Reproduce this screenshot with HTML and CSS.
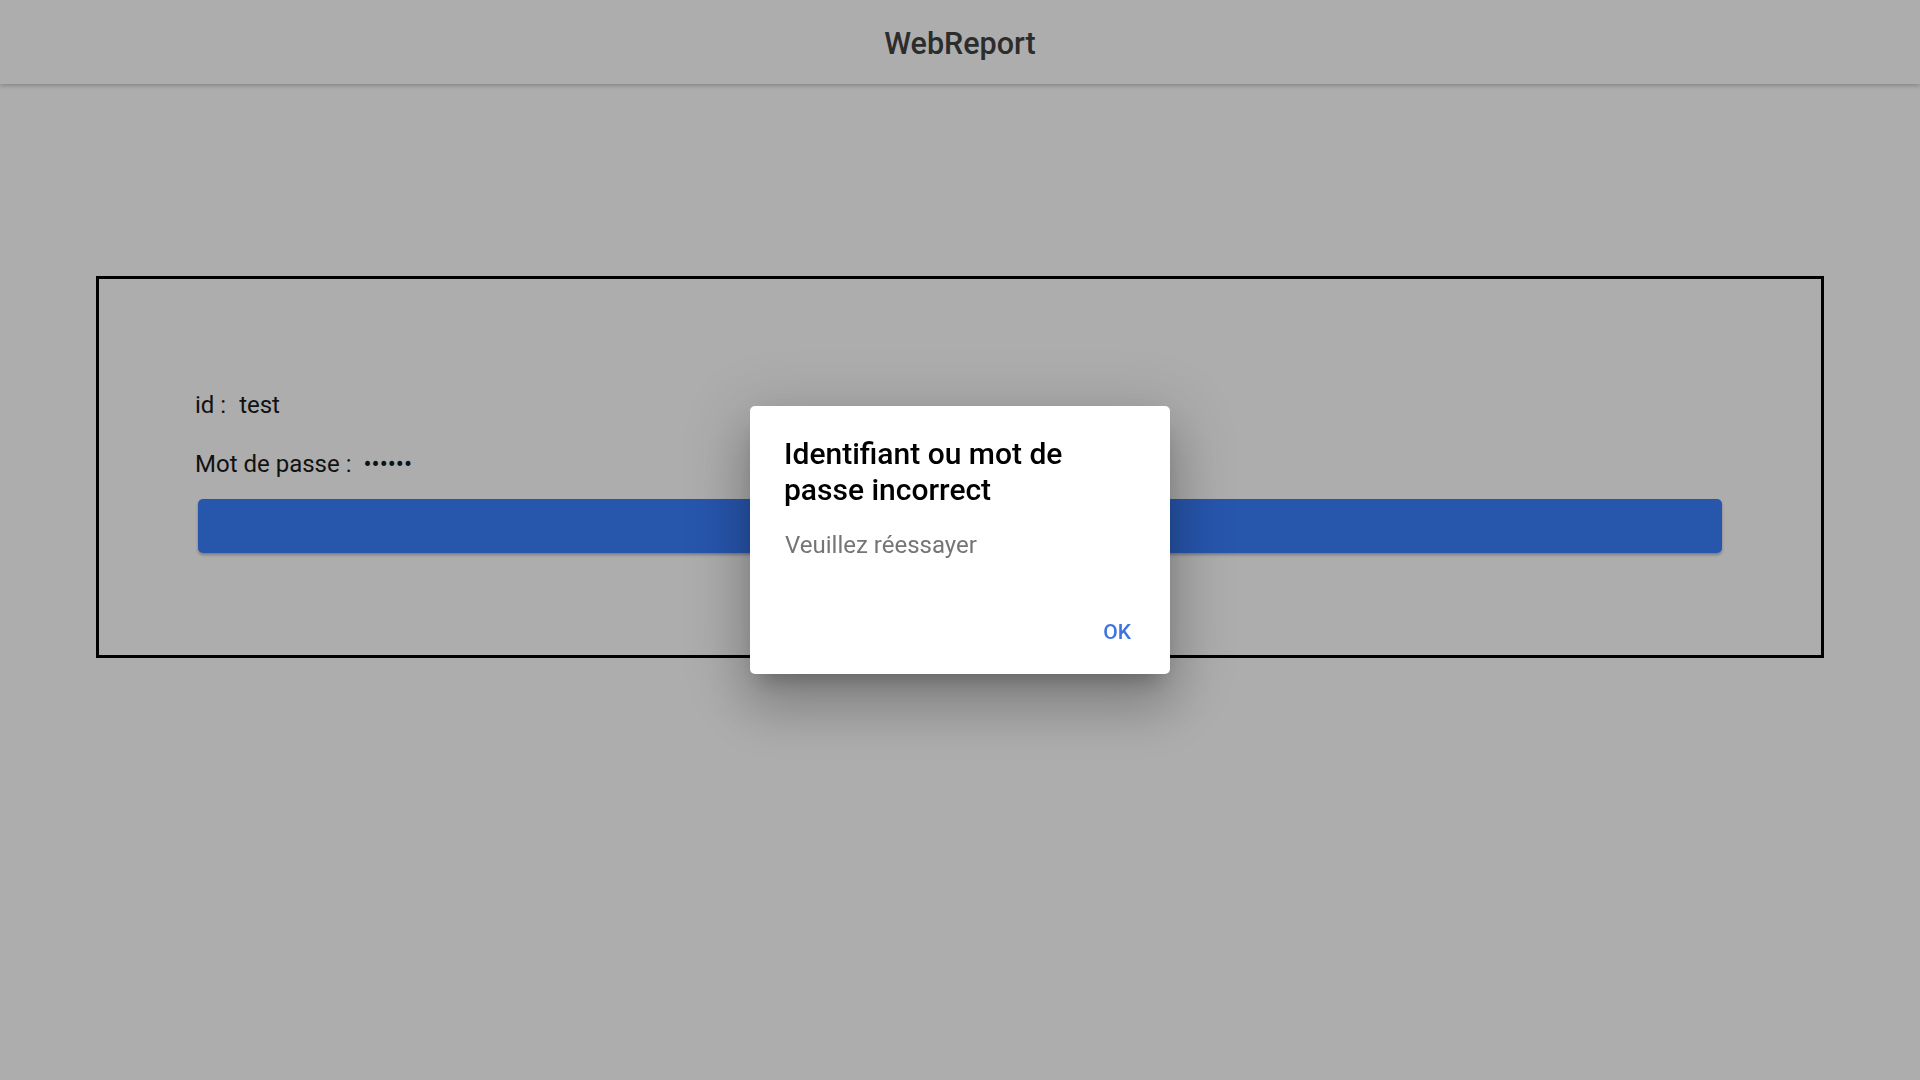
FILE: index.html
```html
<!DOCTYPE html>
<html lang="fr">
<head>
<meta charset="utf-8">
<title>WebReport</title>
<link rel="stylesheet" href="styles.css">
</head>
<body>
<header class="appbar">
  <h1 class="appbar-title">WebReport</h1>
</header>
<main class="page">
  <section class="login-box">
    <div class="field"><span class="field-label">id :</span><span class="field-value">test</span></div>
    <div class="field field-pass"><span class="field-label">Mot de passe :</span><span class="field-value dots">••••••</span></div>
    <div class="submit-btn"></div>
  </section>
</main>
<div class="dialog-layer">
  <div class="dialog" role="alertdialog">
    <h2 class="dialog-title">Identifiant ou mot de passe incorrect</h2>
    <p class="dialog-body">Veuillez réessayer</p>
    <div class="dialog-actions"><span class="dialog-btn">OK</span></div>
  </div>
</div>
</body>
</html>
```
FILE: styles.css
```css
html, body {
  margin: 0;
  padding: 0;
}
body {
  background: #adadad;
  font-family: Roboto, "Noto Sans", Arial, sans-serif;
  width: 1920px;
  height: 1080px;
  overflow: hidden;
}
.appbar {
  height: 84px;
  background: #adadad;
  box-shadow: 0 2px 4px rgba(0,0,0,0.22);
  display: flex;
  align-items: center;
  justify-content: center;
  position: relative;
  z-index: 1;
}
.appbar-title {
  margin: 3px 0 0 0;
  font-size: 30.5px;
  font-weight: 500;
  color: #2c2c2c;
  line-height: 34px;
}
.page {
  padding-top: 192px;
}
.login-box {
  margin: 0 96px;
  border: 3px solid #000;
  padding: 113px 99px 102px 96px;
  display: flex;
  flex-direction: column;
}
.field {
  font-size: 24px;
  line-height: 26px;
  color: #111;
  display: flex;
}
.field-pass {
  margin-top: 33px;
}
.field-value {
  margin-left: 13px;
}
.dots {
  letter-spacing: 0;
  margin-left: 12px;
}
.submit-btn {
  margin: 22px 0 0 3px;
  height: 54px;
  background: #2756ad;
  border-radius: 5px;
  box-shadow: 0 2px 3px rgba(0,0,0,0.28);
}
.dialog-layer {
  position: fixed;
  inset: 0;
  display: flex;
  align-items: center;
  justify-content: center;
  z-index: 10;
}
.dialog {
  width: 420px;
  box-sizing: border-box;
  background: #fff;
  border-radius: 5px;
  padding: 30px 39px 30px 34px;
  box-shadow: 0 15px 20px -10px rgba(0,0,0,0.25), 0 33px 52px 4px rgba(0,0,0,0.16), 0 12px 63px 11px rgba(0,0,0,0.14);
  display: flex;
  flex-direction: column;
}
.dialog-title {
  margin: 0;
  font-size: 30px;
  font-weight: 500;
  line-height: 36px;
  color: #000;
}
.dialog-body {
  margin: 23px 0 0 1px;
  font-size: 24px;
  line-height: 28px;
  color: #757575;
}
.dialog-actions {
  margin-top: 61px;
  display: flex;
  justify-content: flex-end;
}
.dialog-btn {
  font-size: 21px;
  line-height: 24px;
  font-weight: 500;
  color: #3d74e0;
}
```
